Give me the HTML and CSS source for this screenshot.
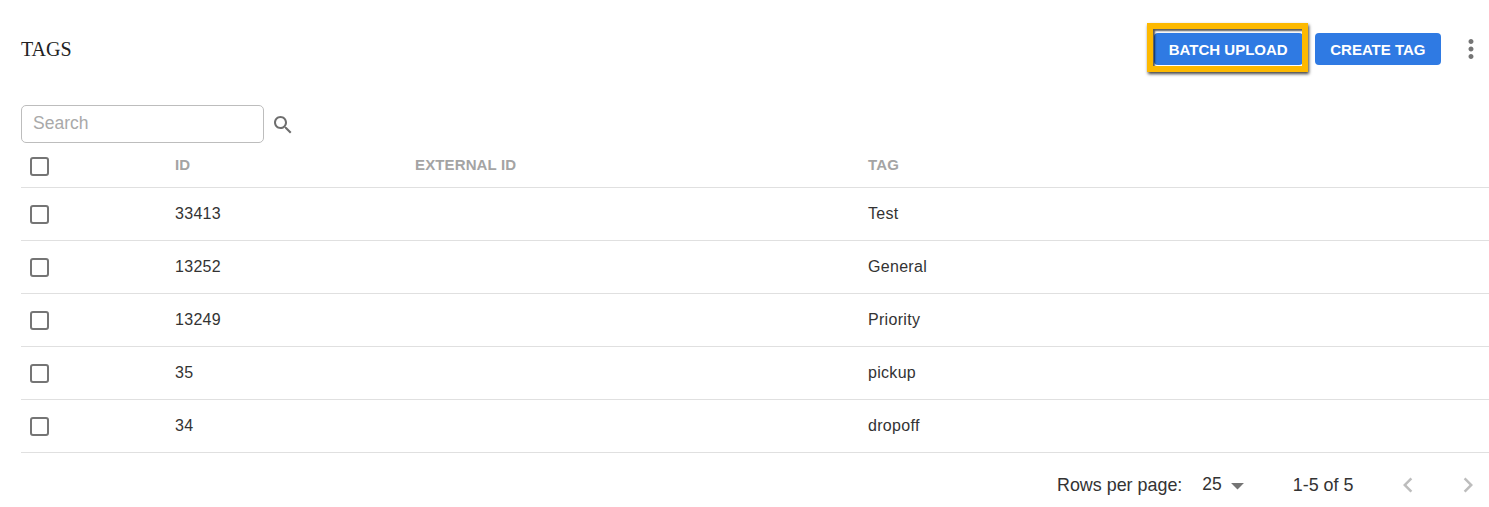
FILE: index.html
```html
<!DOCTYPE html>
<html lang="en">
<head>
<meta charset="utf-8">
<title>Tags</title>
<link rel="stylesheet" href="styles.css">
</head>
<body>
<main class="page">
  <header class="topbar">
    <h1 class="title">TAGS</h1>
    <div class="actions">
      <button class="btn btn-highlight" type="button">BATCH UPLOAD</button>
      <button class="btn" type="button">CREATE TAG</button>
      <button class="more" type="button" aria-label="More">
        <svg width="30" height="30" viewBox="0 0 24 24"><path d="M12 8c1.1 0 2-.9 2-2s-.9-2-2-2-2 .9-2 2 .9 2 2 2zm0 2c-1.1 0-2 .9-2 2s.9 2 2 2 2-.9 2-2-.9-2-2-2zm0 6c-1.1 0-2 .9-2 2s.9 2 2 2 2-.9 2-2-.9-2-2-2z"/></svg>
      </button>
    </div>
  </header>
  <div class="searchbar">
    <div class="search-input">Search</div>
    <svg class="search-icon" width="24" height="24" viewBox="0 0 24 24"><path d="M15.5 14h-.79l-.28-.27C15.41 12.59 16 11.11 16 9.5 16 5.91 13.09 3 9.5 3S3 5.91 3 9.5 5.91 16 9.5 16c1.61 0 3.09-.59 4.23-1.57l.27.28v.79l5 4.99L20.49 19l-4.99-5zm-6 0C7.01 14 5 11.99 5 9.5S7.01 5 9.5 5 14 7.01 14 9.5 11.99 14 9.5 14z"/></svg>
  </div>
  <div class="table">
    <div class="row row-head">
      <span class="check"></span><span>ID</span><span>EXTERNAL ID</span><span>TAG</span>
    </div>
    <div class="row"><span class="check"></span><span>33413</span><span></span><span>Test</span></div>
    <div class="row"><span class="check"></span><span>13252</span><span></span><span>General</span></div>
    <div class="row"><span class="check"></span><span>13249</span><span></span><span>Priority</span></div>
    <div class="row"><span class="check"></span><span>35</span><span></span><span>pickup</span></div>
    <div class="row"><span class="check"></span><span>34</span><span></span><span>dropoff</span></div>
  </div>
  <footer class="pager">
    <span class="rows-label">Rows per page:</span>
    <span class="rows-value">25</span>
    <svg class="caret" width="31" height="31" viewBox="0 0 24 24"><path d="M7 10l5 5 5-5z"/></svg>
    <span class="range">1-5 of 5</span>
    <svg class="nav nav-prev" width="30" height="30" viewBox="0 0 24 24"><path d="M15.41 7.41L14 6l-6 6 6 6 1.41-1.41L10.83 12z"/></svg>
    <svg class="nav nav-next" width="30" height="30" viewBox="0 0 24 24"><path d="M10 6L8.59 7.41 13.17 12l-4.58 4.59L10 18l6-6z"/></svg>
  </footer>
</main>
</body>
</html>
```
FILE: styles.css
```css
* { box-sizing: border-box; }
html, body { margin: 0; padding: 0; background: #fff; }
body { font-family: "Liberation Sans", Arial, sans-serif; color: rgba(0,0,0,.87); overflow: hidden; }
.page { padding-left: 21px; width: 1489px; height: 507px; }
.topbar { display: flex; align-items: center; justify-content: space-between; height: 98px; }
.title { margin: 0; font: 400 20px/1 "Liberation Serif", "Times New Roman", serif; color: #222; }
.actions { display: flex; align-items: center; gap: 12px; padding-right: 3px; }
.btn {
  height: 32px; padding: 1px 15.5px 0; border: 0; border-radius: 4px;
  background: #2f7ae3; color: #fff;
  font: 700 15px/31px "Liberation Sans", Arial, sans-serif;
}
.btn-highlight { width: 149px; padding: 1px 0 0; position: relative; }
.btn-highlight::after {
  content: ""; position: absolute; left: -7px; top: -10px; right: -5px; bottom: -7px;
  border: 6px solid #fdb900;
  box-shadow: 1px 2px 3px rgba(0,0,0,.75), inset 2px 2px 2px rgba(0,0,0,.65);
}
.more { width: 30px; height: 30px; padding: 0; border: 0; background: none; margin-left: 3px; }
.more svg { display: block; fill: #757575; }
.searchbar { display: flex; align-items: flex-start; height: 45px; padding-top: 7px; }
.search-input {
  width: 243px; height: 38px; border: 1px solid #bdbdbd; border-radius: 5px;
  padding-left: 11px; font-size: 17.5px; line-height: 34px; color: #a9a9a9;
}
.search-icon { fill: #6e6e6e; margin: 8px 0 0 7px; }
.table { width: 1468px; margin-top: -1px; }
.row {
  display: grid; grid-template-columns: 154px 240px 453px 1fr;
  align-items: center; height: 53px; border-bottom: 1px solid #e0e0e0;
  font-size: 16px; letter-spacing: .3px; color: #333;
}
.row-head { height: 46px; font-size: 15px; letter-spacing: .13px; font-weight: 700; color: #a4a4a4; }
.check {
  display: block; width: 19px; height: 19px; margin-left: 9px;
  border: 2px solid #757575; border-radius: 3px;
}
.row-head .check { position: relative; top: 2px; }
.pager { display: flex; align-items: center; height: 63px; padding-top: 1px; font-size: 17.9px; color: #333; }
.rows-label { margin-left: 1036px; }
.rows-value { margin-left: 20px; position: relative; top: -1px; font-size: 17.5px; }
.caret { fill: #757575; margin-left: 0; }
.range { margin-left: 40px; }
.nav { fill: #bdbdbd; }
.nav-prev { margin-left: 40px; }
.nav-next { margin-left: 30px; }
```
